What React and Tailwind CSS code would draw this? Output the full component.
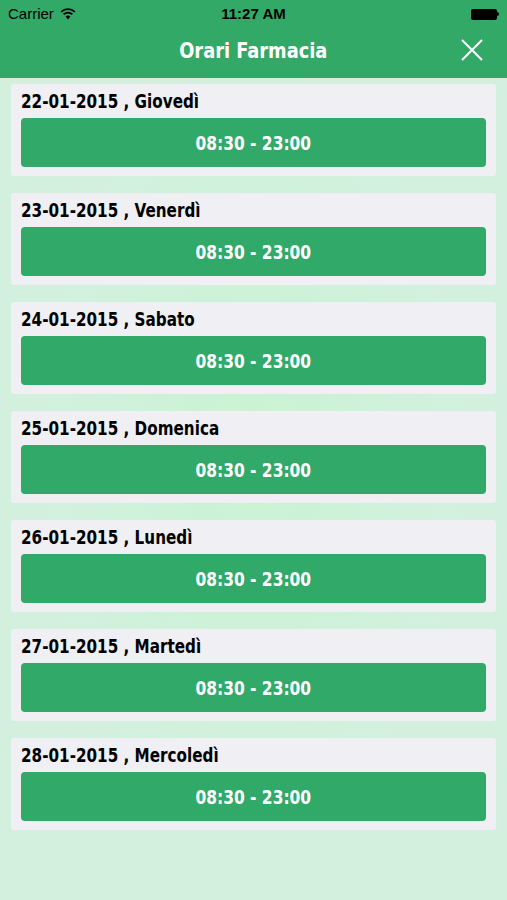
const days = [
  '22-01-2015 , Giovedì',
  '23-01-2015 , Venerdì',
  '24-01-2015 , Sabato',
  '25-01-2015 , Domenica',
  '26-01-2015 , Lunedì',
  '27-01-2015 , Martedì',
  '28-01-2015 , Mercoledì',
];

const narrow = { fontFamily: '"DejaVu Sans Condensed", "Liberation Sans", sans-serif' };

const App = () => {
  return (
    <div className="w-[507px] h-[900px] overflow-hidden bg-[#d3f0df] bg-[radial-gradient(ellipse_at_center,#c9f3d2_0%,#d3f0df_60%)] font-['Liberation_Sans',sans-serif]">
      {/* Status bar + nav */}
      <div className="bg-[#32a966] h-[78px]">
        <div className="h-[28px] flex items-center justify-between px-2 text-[15px] text-black">
          <div className="flex items-center gap-1.5 w-[120px]">
            <span>Carrier</span>
            <svg width="16" height="12" viewBox="0 0 16 12">
              <path d="M8 11.5 L5.6 8.6 A3.6 3.6 0 0 1 10.4 8.6 Z" fill="black" />
              <path d="M3.6 6.4 A6.4 6.4 0 0 1 12.4 6.4" stroke="black" strokeWidth="1.8" fill="none" />
              <path d="M1.2 3.8 A9.8 9.8 0 0 1 14.8 3.8" stroke="black" strokeWidth="1.8" fill="none" />
            </svg>
          </div>
          <span className="font-bold">11:27 AM</span>
          <div className="w-[120px] flex justify-end">
            <div className="flex items-center">
              <div className="w-[26px] h-[11px] bg-black rounded-[2px]" />
              <div className="w-[2px] h-[4px] bg-black rounded-r-sm" />
            </div>
          </div>
        </div>
        <div className="relative h-[44px] flex items-center justify-center">
          <span className="inline-block text-white text-[22px] font-bold scale-x-[0.9]" style={narrow}>Orari Farmacia</span>
          <svg className="absolute right-[24px] top-[11px]" width="22" height="22" viewBox="0 0 22 22">
            <path d="M1 1 L21 21 M21 1 L1 21" stroke="white" strokeWidth="2" />
          </svg>
        </div>
      </div>

      {/* Days */}
      <div className="flex flex-col gap-[17px] px-[11px] pt-[6px]">
        {days.map((d) => (
          <div key={d} className="bg-[#efeff4] rounded-[3px] h-[92px] px-[10px] flex flex-col">
            <div className="h-[34px] flex items-center">
              <span className="inline-block origin-left scale-x-[0.845] text-[20px] font-bold text-black whitespace-nowrap" style={narrow}>
                {d}
              </span>
            </div>
            <div className="h-[49px] bg-[#31a968] rounded-[4px] flex items-center justify-center">
              <span className="inline-block scale-x-[0.86] text-white text-[20px] font-bold" style={narrow}>
                08:30 - 23:00
              </span>
            </div>
          </div>
        ))}
      </div>
    </div>
  );
};

export default App;
